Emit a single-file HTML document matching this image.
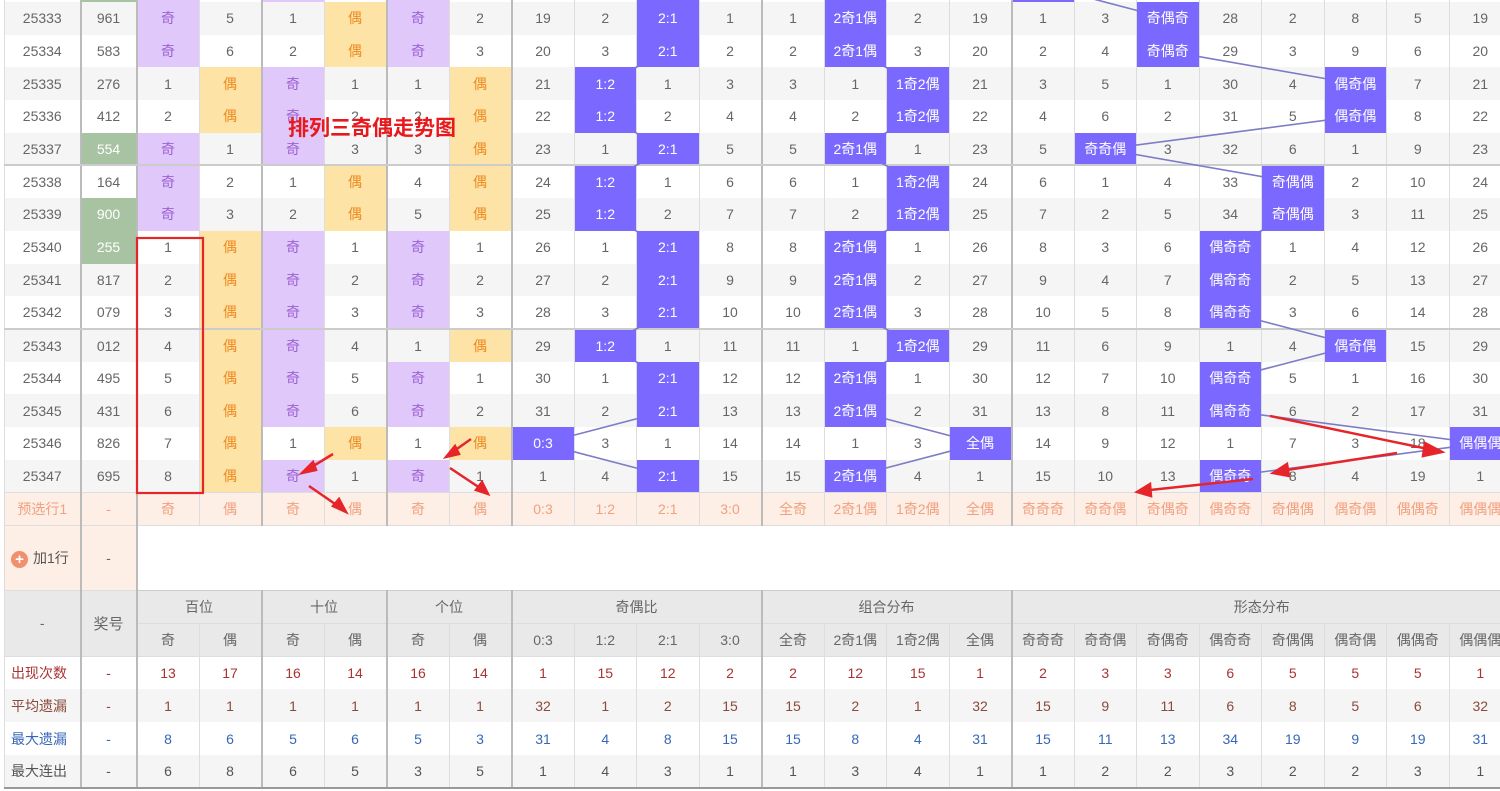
<!DOCTYPE html>
<html><head><meta charset="utf-8">
<style>
html,body{margin:0;padding:0;background:#fff;overflow:hidden;width:1500px;height:791px;position:relative}
body{font-family:"Liberation Sans","Noto Sans CJK SC",sans-serif;font-size:14px;color:#666}
table{position:absolute;left:4px;top:-30.7px;border-collapse:collapse;table-layout:fixed;width:1507px}
td{border-left:1px solid #ddd;border-right:1px solid #ddd;text-align:center;padding:0;height:32.7px;box-sizing:border-box;white-space:nowrap;overflow:hidden}
tr.d:nth-child(odd) td{background:#fff}
tr.d:nth-child(even) td{background:#f5f5f5}
tr.sep td{border-top:2px solid #ccc}
col.g{border-left:2px solid #bbb}
td.q{background:#e0c8fb !important;color:#9b62d3}
td.o{background:#fde3a5 !important;color:#ee8a22}
td.h{background:#7b68fe !important;color:#fff;position:relative;z-index:2}
td.gr{background:#a7c3a1 !important;color:#fff}
tr.pre td{background:#fdeee6;color:#f2a07e;height:33px;border-top:1px solid #ddd;border-bottom:1px solid #ddd}
tr.add td{height:65px;background:#fff}
tr.add td.pk{background:#fdeee6;color:#666}
tr.hd td{background:#e9e9e9;height:33px;color:#666;border:1px solid #ddd}
tr.st td{height:33px}
tr.st1 td{background:#fff;color:#a33}
tr.st2 td{background:#f5f5f5;color:#8a4a3c}
tr.st3 td{background:#fff;color:#3767b8}
tr.st4 td{background:#f5f5f5;color:#555}
tr.st td:first-child{text-align:left;padding-left:6px}
.plus{display:inline-block;width:17px;height:17px;border-radius:50%;background:#f0906e;color:#fff;font-size:15px;line-height:17px;text-align:center;vertical-align:middle;margin-right:5px;font-weight:bold}
</style></head><body>
<table>
<colgroup><col style="width:76px"><col class="g" style="width:56px"><col class="g" style="width:62.5px"><col style="width:62.5px"><col class="g" style="width:62.5px"><col style="width:62.5px"><col class="g" style="width:62.5px"><col style="width:62.5px"><col class="g" style="width:62.5px"><col style="width:62.5px"><col style="width:62.5px"><col style="width:62.5px"><col class="g" style="width:62.5px"><col style="width:62.5px"><col style="width:62.5px"><col style="width:62.5px"><col class="g" style="width:62.5px"><col style="width:62.5px"><col style="width:62.5px"><col style="width:62.5px"><col style="width:62.5px"><col style="width:62.5px"><col style="width:62.5px"><col style="width:62.5px"></colgroup>
<tbody>
<tr class="d"><td>25332</td><td class="gr">0</td><td class="q">奇</td><td>4</td><td class="q">奇</td><td>1</td><td class="q">奇</td><td>1</td><td>18</td><td>1</td><td class="h">2:1</td><td>1</td><td>1</td><td class="h">2奇1偶</td><td>1</td><td>18</td><td class="h">奇奇奇</td><td>2</td><td>1</td><td>27</td><td>1</td><td>7</td><td>4</td><td>18</td></tr>
<tr class="d"><td>25333</td><td>961</td><td class="q">奇</td><td>5</td><td>1</td><td class="o">偶</td><td class="q">奇</td><td>2</td><td>19</td><td>2</td><td class="h">2:1</td><td>1</td><td>1</td><td class="h">2奇1偶</td><td>2</td><td>19</td><td>1</td><td>3</td><td class="h">奇偶奇</td><td>28</td><td>2</td><td>8</td><td>5</td><td>19</td></tr>
<tr class="d"><td>25334</td><td>583</td><td class="q">奇</td><td>6</td><td>2</td><td class="o">偶</td><td class="q">奇</td><td>3</td><td>20</td><td>3</td><td class="h">2:1</td><td>2</td><td>2</td><td class="h">2奇1偶</td><td>3</td><td>20</td><td>2</td><td>4</td><td class="h">奇偶奇</td><td>29</td><td>3</td><td>9</td><td>6</td><td>20</td></tr>
<tr class="d"><td>25335</td><td>276</td><td>1</td><td class="o">偶</td><td class="q">奇</td><td>1</td><td>1</td><td class="o">偶</td><td>21</td><td class="h">1:2</td><td>1</td><td>3</td><td>3</td><td>1</td><td class="h">1奇2偶</td><td>21</td><td>3</td><td>5</td><td>1</td><td>30</td><td>4</td><td class="h">偶奇偶</td><td>7</td><td>21</td></tr>
<tr class="d"><td>25336</td><td>412</td><td>2</td><td class="o">偶</td><td class="q">奇</td><td>2</td><td>2</td><td class="o">偶</td><td>22</td><td class="h">1:2</td><td>2</td><td>4</td><td>4</td><td>2</td><td class="h">1奇2偶</td><td>22</td><td>4</td><td>6</td><td>2</td><td>31</td><td>5</td><td class="h">偶奇偶</td><td>8</td><td>22</td></tr>
<tr class="d"><td>25337</td><td class="gr">554</td><td class="q">奇</td><td>1</td><td class="q">奇</td><td>3</td><td>3</td><td class="o">偶</td><td>23</td><td>1</td><td class="h">2:1</td><td>5</td><td>5</td><td class="h">2奇1偶</td><td>1</td><td>23</td><td>5</td><td class="h">奇奇偶</td><td>3</td><td>32</td><td>6</td><td>1</td><td>9</td><td>23</td></tr>
<tr class="d sep"><td>25338</td><td>164</td><td class="q">奇</td><td>2</td><td>1</td><td class="o">偶</td><td>4</td><td class="o">偶</td><td>24</td><td class="h">1:2</td><td>1</td><td>6</td><td>6</td><td>1</td><td class="h">1奇2偶</td><td>24</td><td>6</td><td>1</td><td>4</td><td>33</td><td class="h">奇偶偶</td><td>2</td><td>10</td><td>24</td></tr>
<tr class="d"><td>25339</td><td class="gr">900</td><td class="q">奇</td><td>3</td><td>2</td><td class="o">偶</td><td>5</td><td class="o">偶</td><td>25</td><td class="h">1:2</td><td>2</td><td>7</td><td>7</td><td>2</td><td class="h">1奇2偶</td><td>25</td><td>7</td><td>2</td><td>5</td><td>34</td><td class="h">奇偶偶</td><td>3</td><td>11</td><td>25</td></tr>
<tr class="d"><td>25340</td><td class="gr">255</td><td>1</td><td class="o">偶</td><td class="q">奇</td><td>1</td><td class="q">奇</td><td>1</td><td>26</td><td>1</td><td class="h">2:1</td><td>8</td><td>8</td><td class="h">2奇1偶</td><td>1</td><td>26</td><td>8</td><td>3</td><td>6</td><td class="h">偶奇奇</td><td>1</td><td>4</td><td>12</td><td>26</td></tr>
<tr class="d"><td>25341</td><td>817</td><td>2</td><td class="o">偶</td><td class="q">奇</td><td>2</td><td class="q">奇</td><td>2</td><td>27</td><td>2</td><td class="h">2:1</td><td>9</td><td>9</td><td class="h">2奇1偶</td><td>2</td><td>27</td><td>9</td><td>4</td><td>7</td><td class="h">偶奇奇</td><td>2</td><td>5</td><td>13</td><td>27</td></tr>
<tr class="d"><td>25342</td><td>079</td><td>3</td><td class="o">偶</td><td class="q">奇</td><td>3</td><td class="q">奇</td><td>3</td><td>28</td><td>3</td><td class="h">2:1</td><td>10</td><td>10</td><td class="h">2奇1偶</td><td>3</td><td>28</td><td>10</td><td>5</td><td>8</td><td class="h">偶奇奇</td><td>3</td><td>6</td><td>14</td><td>28</td></tr>
<tr class="d sep"><td>25343</td><td>012</td><td>4</td><td class="o">偶</td><td class="q">奇</td><td>4</td><td>1</td><td class="o">偶</td><td>29</td><td class="h">1:2</td><td>1</td><td>11</td><td>11</td><td>1</td><td class="h">1奇2偶</td><td>29</td><td>11</td><td>6</td><td>9</td><td>1</td><td>4</td><td class="h">偶奇偶</td><td>15</td><td>29</td></tr>
<tr class="d"><td>25344</td><td>495</td><td>5</td><td class="o">偶</td><td class="q">奇</td><td>5</td><td class="q">奇</td><td>1</td><td>30</td><td>1</td><td class="h">2:1</td><td>12</td><td>12</td><td class="h">2奇1偶</td><td>1</td><td>30</td><td>12</td><td>7</td><td>10</td><td class="h">偶奇奇</td><td>5</td><td>1</td><td>16</td><td>30</td></tr>
<tr class="d"><td>25345</td><td>431</td><td>6</td><td class="o">偶</td><td class="q">奇</td><td>6</td><td class="q">奇</td><td>2</td><td>31</td><td>2</td><td class="h">2:1</td><td>13</td><td>13</td><td class="h">2奇1偶</td><td>2</td><td>31</td><td>13</td><td>8</td><td>11</td><td class="h">偶奇奇</td><td>6</td><td>2</td><td>17</td><td>31</td></tr>
<tr class="d"><td>25346</td><td>826</td><td>7</td><td class="o">偶</td><td>1</td><td class="o">偶</td><td>1</td><td class="o">偶</td><td class="h">0:3</td><td>3</td><td>1</td><td>14</td><td>14</td><td>1</td><td>3</td><td class="h">全偶</td><td>14</td><td>9</td><td>12</td><td>1</td><td>7</td><td>3</td><td>18</td><td class="h">偶偶偶</td></tr>
<tr class="d"><td>25347</td><td>695</td><td>8</td><td class="o">偶</td><td class="q">奇</td><td>1</td><td class="q">奇</td><td>1</td><td>1</td><td>4</td><td class="h">2:1</td><td>15</td><td>15</td><td class="h">2奇1偶</td><td>4</td><td>1</td><td>15</td><td>10</td><td>13</td><td class="h">偶奇奇</td><td>8</td><td>4</td><td>19</td><td>1</td></tr>
<tr class="pre"><td>预选行1</td><td>-</td><td>奇</td><td>偶</td><td>奇</td><td>偶</td><td>奇</td><td>偶</td><td>0:3</td><td>1:2</td><td>2:1</td><td>3:0</td><td>全奇</td><td>2奇1偶</td><td>1奇2偶</td><td>全偶</td><td>奇奇奇</td><td>奇奇偶</td><td>奇偶奇</td><td>偶奇奇</td><td>奇偶偶</td><td>偶奇偶</td><td>偶偶奇</td><td>偶偶偶</td></tr>
<tr class="add"><td class="pk" style="text-align:left;padding-left:6px;color:#555"><span class="plus">+</span>加1行</td><td class="pk">-</td><td colspan="22" style="border-bottom:1px solid #ccc"></td></tr>
<tr class="hd"><td rowspan="2">-</td><td rowspan="2" style="font-size:15px">奖号</td><td colspan="2">百位</td><td colspan="2">十位</td><td colspan="2">个位</td><td colspan="4">奇偶比</td><td colspan="4">组合分布</td><td colspan="8">形态分布</td></tr>
<tr class="hd"><td>奇</td><td>偶</td><td>奇</td><td>偶</td><td>奇</td><td>偶</td><td>0:3</td><td>1:2</td><td>2:1</td><td>3:0</td><td>全奇</td><td>2奇1偶</td><td>1奇2偶</td><td>全偶</td><td>奇奇奇</td><td>奇奇偶</td><td>奇偶奇</td><td>偶奇奇</td><td>奇偶偶</td><td>偶奇偶</td><td>偶偶奇</td><td>偶偶偶</td></tr>
<tr class="st st1"><td>出现次数</td><td>-</td><td>13</td><td>17</td><td>16</td><td>14</td><td>16</td><td>14</td><td>1</td><td>15</td><td>12</td><td>2</td><td>2</td><td>12</td><td>15</td><td>1</td><td>2</td><td>3</td><td>3</td><td>6</td><td>5</td><td>5</td><td>5</td><td>1</td></tr>
<tr class="st st2"><td>平均遗漏</td><td>-</td><td>1</td><td>1</td><td>1</td><td>1</td><td>1</td><td>1</td><td>32</td><td>1</td><td>2</td><td>15</td><td>15</td><td>2</td><td>1</td><td>32</td><td>15</td><td>9</td><td>11</td><td>6</td><td>8</td><td>5</td><td>6</td><td>32</td></tr>
<tr class="st st3"><td>最大遗漏</td><td>-</td><td>8</td><td>6</td><td>5</td><td>6</td><td>5</td><td>3</td><td>31</td><td>4</td><td>8</td><td>15</td><td>15</td><td>8</td><td>4</td><td>31</td><td>15</td><td>11</td><td>13</td><td>34</td><td>19</td><td>9</td><td>19</td><td>31</td></tr>
<tr class="st st4" style="border-bottom:2px solid #999"><td>最大连出</td><td>-</td><td>6</td><td>8</td><td>6</td><td>5</td><td>3</td><td>5</td><td>1</td><td>4</td><td>3</td><td>1</td><td>1</td><td>3</td><td>4</td><td>1</td><td>1</td><td>2</td><td>2</td><td>3</td><td>2</td><td>2</td><td>3</td><td>1</td></tr>
</tbody></table>

<svg style="position:absolute;left:0;top:0;z-index:1" width="1500" height="791">
<g fill="none" stroke="#7d7cc6" stroke-width="1.6">
<polyline points="667.25,-14.35 667.25,18.35 667.25,51.05 604.75,83.75 604.75,116.45 667.25,149.15 604.75,181.85 604.75,214.55 667.25,247.25 667.25,279.95 667.25,312.65 604.75,345.35 667.25,378.05 667.25,410.75 542.25,443.45 667.25,476.15"/>
<polyline points="854.75,-14.35 854.75,18.35 854.75,51.05 917.25,83.75 917.25,116.45 854.75,149.15 917.25,181.85 917.25,214.55 854.75,247.25 854.75,279.95 854.75,312.65 917.25,345.35 854.75,378.05 854.75,410.75 979.75,443.45 854.75,476.15"/>
<polyline points="1042.25,-14.35 1167.25,18.35 1167.25,51.05 1354.75,83.75 1354.75,116.45 1104.75,149.15 1292.25,181.85 1292.25,214.55 1229.75,247.25 1229.75,279.95 1229.75,312.65 1354.75,345.35 1229.75,378.05 1229.75,410.75 1479.75,443.45 1229.75,476.15"/>
</g></svg>

<div style="position:absolute;left:288px;top:113px;z-index:3;color:#e8191d;font-weight:bold;font-size:21px;font-family:'Noto Sans CJK SC',sans-serif;line-height:28px">排列三奇偶走势图</div>
<svg style="position:absolute;left:0;top:0;z-index:3" width="1500" height="791">
<rect x="137" y="238" width="66" height="255" fill="none" stroke="#e5252a" stroke-width="2.2"/>
<g stroke="#e5252a" stroke-width="2.5" fill="#e5252a">
<line x1="333" y1="454" x2="310" y2="468"/><polygon points="302,473 313,462 316,470"/>
<line x1="309" y1="486" x2="338" y2="506"/><polygon points="346,512 333,506 339,499"/>
<line x1="471" y1="439" x2="454" y2="451"/><polygon points="446,457 455,446 459,454"/>
<line x1="450" y1="468" x2="480" y2="488"/><polygon points="488,494 476,490 482,482"/>
<line x1="1270" y1="416" x2="1428" y2="449"/><polygon points="1442,452 1425,443 1423,456"/>
<line x1="1397" y1="453" x2="1287" y2="470"/><polygon points="1273,473 1287,464 1289,476"/>
<line x1="1253" y1="479" x2="1150" y2="490"/><polygon points="1137,492 1150,484 1151,496"/>
</g></svg>
</body></html>
